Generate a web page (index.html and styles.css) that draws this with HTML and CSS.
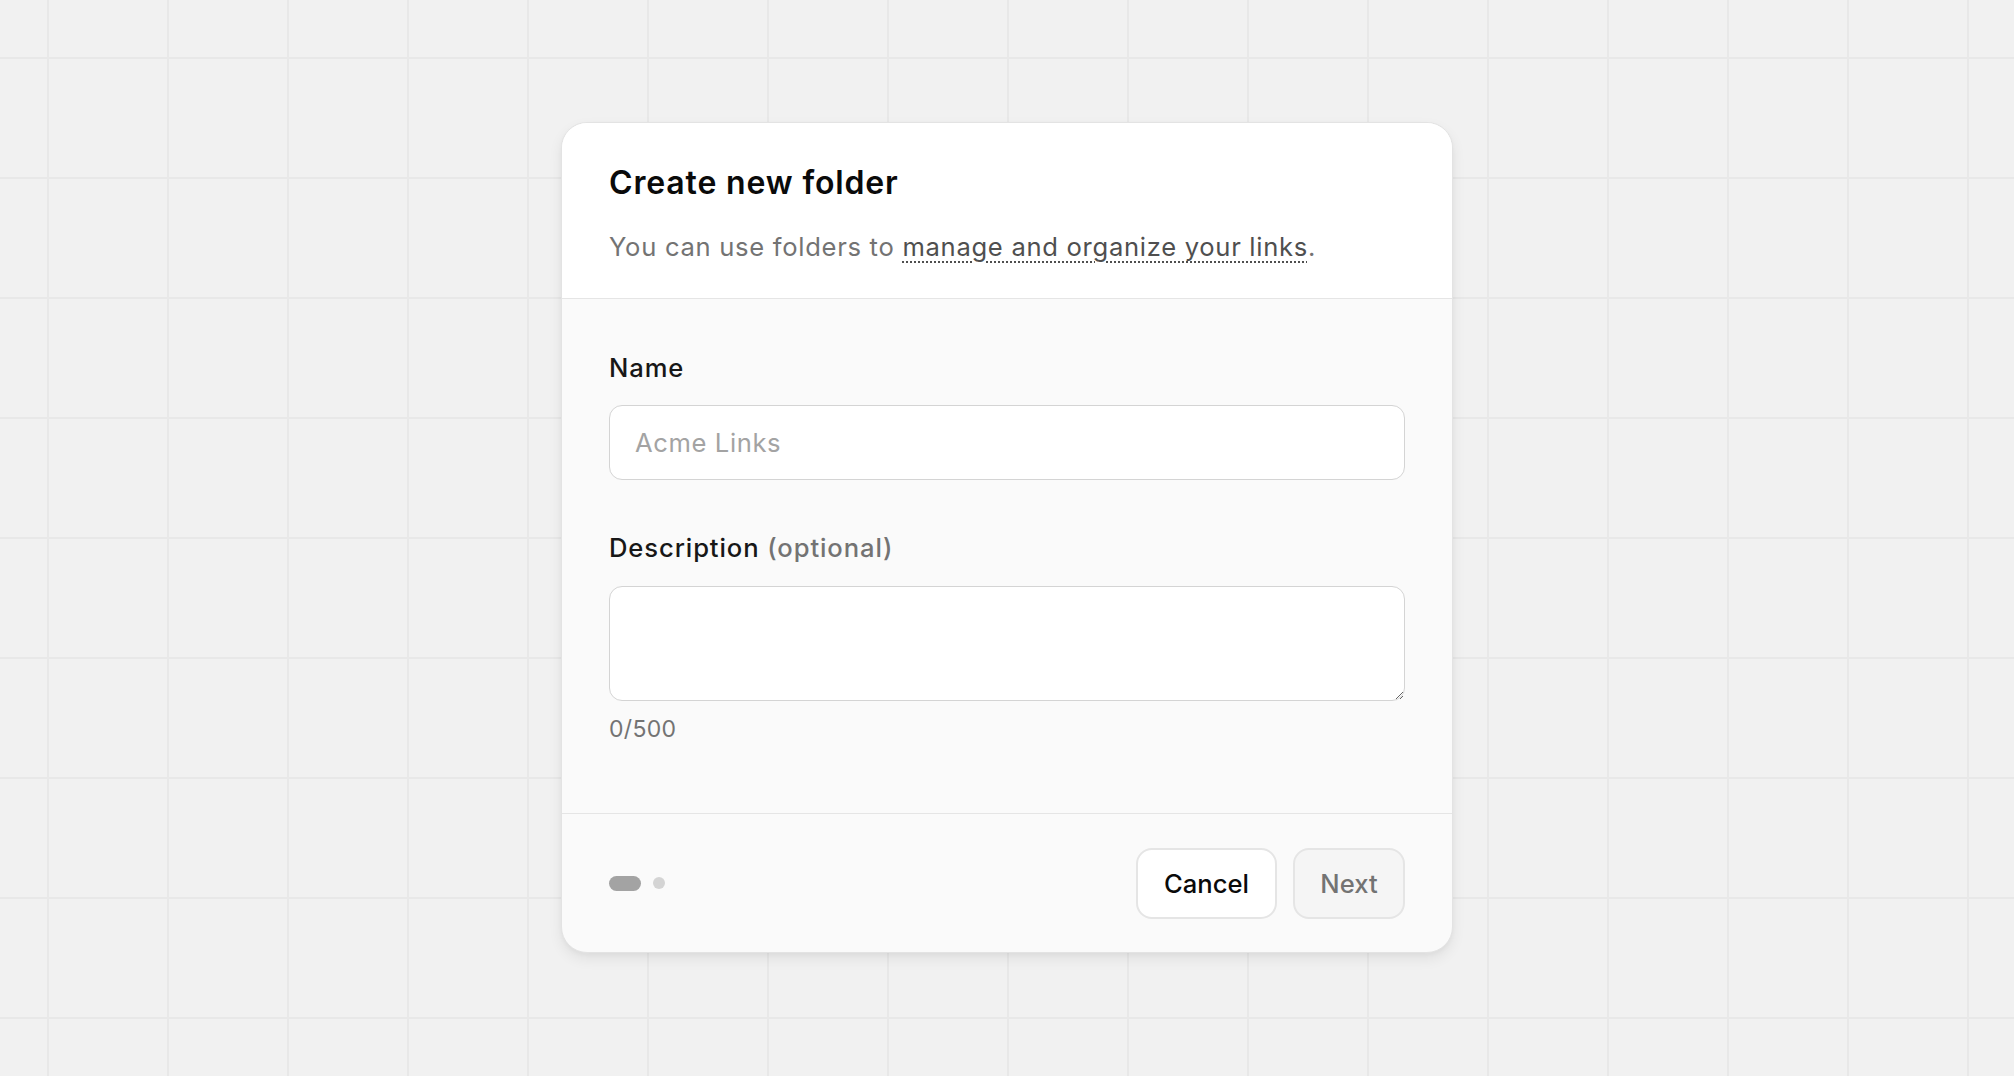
FILE: index.html
```html
<!DOCTYPE html>
<html lang="en">
<head>
<meta charset="utf-8">
<title>Create new folder</title>
<link rel="stylesheet" href="styles.css">
</head>
<body>
<div class="stage">
  <div class="modal">
    <div class="modal-header">
      <h2 class="title">Create new folder</h2>
      <p class="subtitle">You can use folders to <a class="link" href="#">manage and organize your links</a>.</p>
    </div>
    <div class="modal-body">
      <label class="label" for="name">Name</label>
      <input class="input" id="name" type="text" placeholder="Acme Links">
      <label class="label label-desc" for="desc">Description <span class="optional">(optional)</span></label>
      <textarea class="textarea" id="desc"></textarea>
      <div class="counter">0/500</div>
    </div>
    <div class="modal-footer">
      <div class="steps"><span class="pill"></span><span class="dot"></span></div>
      <div class="actions">
        <button class="btn btn-cancel" type="button">Cancel</button>
        <button class="btn btn-next" type="button">Next</button>
      </div>
    </div>
  </div>
</div>
</body>
</html>
```

FILE: styles.css
```css
* { box-sizing: border-box; }

html, body {
  margin: 0;
  padding: 0;
  height: 100%;
}

body {
  font-family: Inter, "Noto Sans", "Liberation Sans", sans-serif;
  background-color: #f1f1f1;
  background-image:
    linear-gradient(to right, #e8e8e8 0, #e8e8e8 2px, transparent 2px),
    linear-gradient(to bottom, #e8e8e8 0, #e8e8e8 2px, transparent 2px);
  background-size: 120px 120px, 120px 120px;
  background-position: 47px 0, 0 57px;
  color: #171717;
}

.stage {
  height: 100vh;
  display: flex;
  align-items: center;
  justify-content: center;
}

.modal {
  width: 892px;
  margin-top: -2px;
  background: #fafafa;
  border: 1px solid #e3e3e3;
  border-radius: 26px;
  overflow: hidden;
  box-shadow: 0 6px 14px rgba(0, 0, 0, 0.07), 0 2px 4px rgba(0, 0, 0, 0.03);
}

.modal-header {
  background: #ffffff;
  padding: 40px 47px 33px;
  border-bottom: 1px solid #e5e5e5;
}

.title {
  margin: 0;
  font-size: 32px;
  line-height: 40px;
  font-weight: 600;
  color: #0a0a0a;
  letter-spacing: 0.85px;
}

.subtitle {
  margin: 26px 0 0;
  font-size: 25.6px;
  line-height: 36px;
  color: #737373;
  letter-spacing: 0.7px;
}

.link {
  color: #4f4f4f;
  text-decoration: underline dotted;
  text-decoration-thickness: 2px;
  text-underline-offset: 6px;
  text-decoration-color: #4f4f4f;
}

.modal-body {
  padding: 53px 47px 68px;
  display: flex;
  flex-direction: column;
}

.label {
  font-size: 25.6px;
  line-height: 32px;
  font-weight: 550;
  color: #171717;
  letter-spacing: 0.9px;
}

.label-desc { margin-top: 52px; }

.optional {
  color: #737373;
}

.input {
  margin-top: 21px;
  height: 75px;
  width: 100%;
  border: 1.5px solid #d4d4d4;
  border-radius: 13px;
  background: #ffffff;
  padding: 0 25px;
  font-family: inherit;
  font-size: 25.6px;
  letter-spacing: 0.6px;
  color: #171717;
  outline: none;
}

.input::placeholder { color: #a3a3a3; }

.textarea {
  margin-top: 22px;
  height: 115px;
  width: 100%;
  border: 1.5px solid #d4d4d4;
  border-radius: 13px;
  background: #ffffff;
  padding: 16px 25px;
  font-family: inherit;
  font-size: 25.6px;
  outline: none;
  display: block;
}

.counter {
  margin-top: 12px;
  font-size: 23px;
  line-height: 32px;
  color: #737373;
  letter-spacing: 0.3px;
}

.modal-footer {
  border-top: 1px solid #e5e5e5;
  padding: 34px 47px 33px;
  display: flex;
  align-items: center;
  justify-content: space-between;
}

.steps {
  display: flex;
  align-items: center;
  gap: 12px;
}

.pill {
  width: 32px;
  height: 15px;
  border-radius: 8px;
  background: #a3a3a3;
}

.dot {
  width: 12px;
  height: 12px;
  border-radius: 50%;
  background: #d4d4d4;
}

.actions {
  display: flex;
  gap: 16px;
}

.btn {
  height: 71px;
  padding: 0 20px;
  border-radius: 16px;
  border: 2px solid #e5e5e5;
  font-family: inherit;
  font-size: 25.6px;
  font-weight: 500;
  cursor: pointer;
}

.btn-cancel {
  background: #ffffff;
  color: #0a0a0a;
  width: 141px;
}

.btn-next {
  background: #f5f5f5;
  color: #737373;
  width: 112px;
}
```
